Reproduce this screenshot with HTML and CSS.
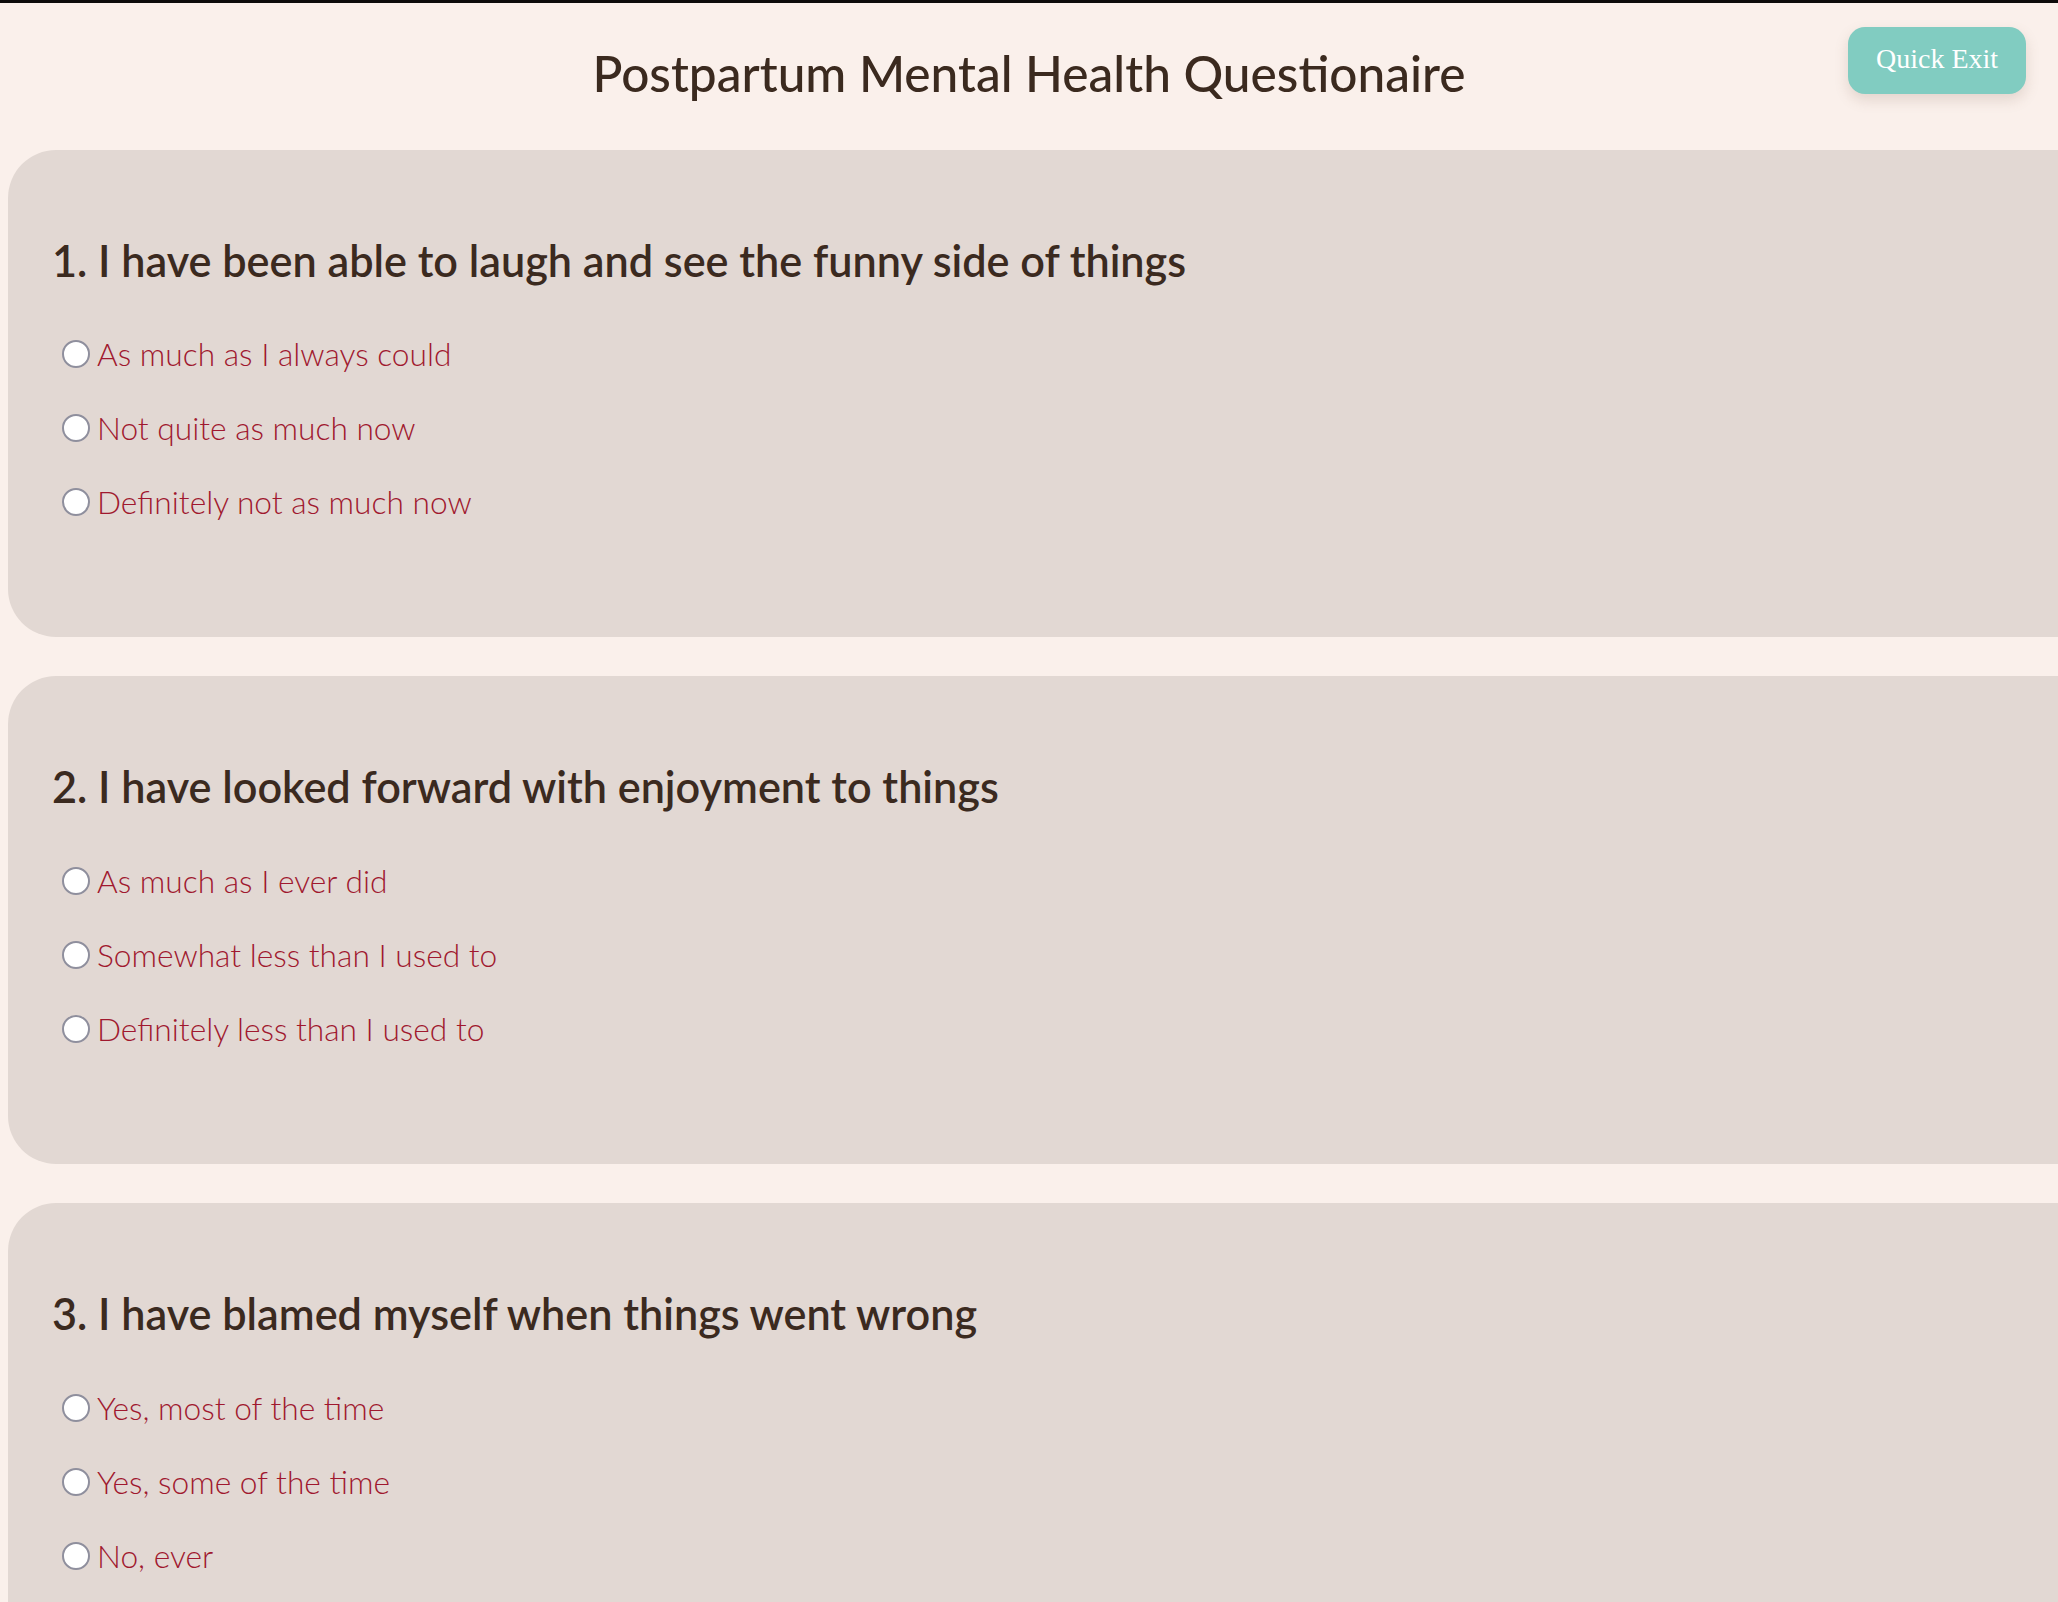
FILE: index.html
```html
<!DOCTYPE html>
<html lang="en">
<head>
<meta charset="utf-8">
<title>Postpartum Mental Health Questionaire</title>
<link rel="stylesheet" href="styles.css">
</head>
<body>
<header class="top">
  <h1 class="title">Postpartum Mental Health Questionaire</h1>
  <button class="quick-exit" type="button">Quick Exit</button>
</header>
<main class="questions">
  <section class="card">
    <h2 class="question">1. I have been able to laugh and see the funny side of things</h2>
    <div class="options">
      <label class="option"><input class="radio" type="radio" name="q1"><span>As much as I always could</span></label>
      <label class="option"><input class="radio" type="radio" name="q1"><span>Not quite as much now</span></label>
      <label class="option"><input class="radio" type="radio" name="q1"><span>Definitely not as much now</span></label>
    </div>
  </section>
  <section class="card">
    <h2 class="question">2. I have looked forward with enjoyment to things</h2>
    <div class="options">
      <label class="option"><input class="radio" type="radio" name="q2"><span>As much as I ever did</span></label>
      <label class="option"><input class="radio" type="radio" name="q2"><span>Somewhat less than I used to</span></label>
      <label class="option"><input class="radio" type="radio" name="q2"><span>Definitely less than I used to</span></label>
    </div>
  </section>
  <section class="card">
    <h2 class="question">3. I have blamed myself when things went wrong</h2>
    <div class="options">
      <label class="option"><input class="radio" type="radio" name="q3"><span>Yes, most of the time</span></label>
      <label class="option"><input class="radio" type="radio" name="q3"><span>Yes, some of the time</span></label>
      <label class="option"><input class="radio" type="radio" name="q3"><span>No, ever</span></label>
    </div>
  </section>
</main>
</body>
</html>
```
FILE: styles.css
```css
html {
  border-top: 3px solid #0d0b0a;
  background: #faf0eb;
}
body {
  margin: 0 0 0 8px;
  background: #faf0eb;
  overflow-x: hidden;
  font-family: "Lato", "Noto Sans", sans-serif;
}
.top {
  position: relative;
  padding-top: 41px;
}
.title {
  margin: 0;
  text-align: center;
  font-size: 49.6px;
  line-height: 1.2;
  font-weight: 500;
  color: #3b2a1f;
  padding-right: 8px;
}
.quick-exit {
  position: absolute;
  top: 24px;
  right: 32px;
  width: 178px;
  height: 67px;
  padding: 0 0 4px;
  border: none;
  border-radius: 17px;
  background: #81ccc1;
  color: #ffffff;
  font-family: "Liberation Serif", serif;
  font-size: 28px;
  box-shadow: 0 6px 14px rgba(120, 90, 70, 0.18);
  cursor: pointer;
}
.questions {
  display: flex;
  flex-direction: column;
  gap: 39px;
  margin-top: 46px;
}
.card {
  width: calc(100% + 200px);
  background: #e2d8d3;
  border-radius: 48px;
  padding: 85px 0 116px 44px;
  box-sizing: border-box;
}
.question {
  margin: 0 0 49px;
  font-size: 43.2px;
  line-height: 1.2;
  font-weight: 600;
  color: #3b2a1f;
}
.options {
  display: flex;
  flex-direction: column;
  gap: 36px;
}
.option {
  display: flex;
  align-items: center;
  font-size: 31.7px;
  line-height: 38px;
  font-weight: 300;
  color: #a0182f;
}
.radio {
  appearance: none;
  -webkit-appearance: none;
  width: 28px;
  height: 28px;
  margin: 0 7px 0 10px;
  flex: none;
  border: 2px solid #8f8f9d;
  border-radius: 50%;
  background: #ffffff;
  box-sizing: border-box;
}
```
